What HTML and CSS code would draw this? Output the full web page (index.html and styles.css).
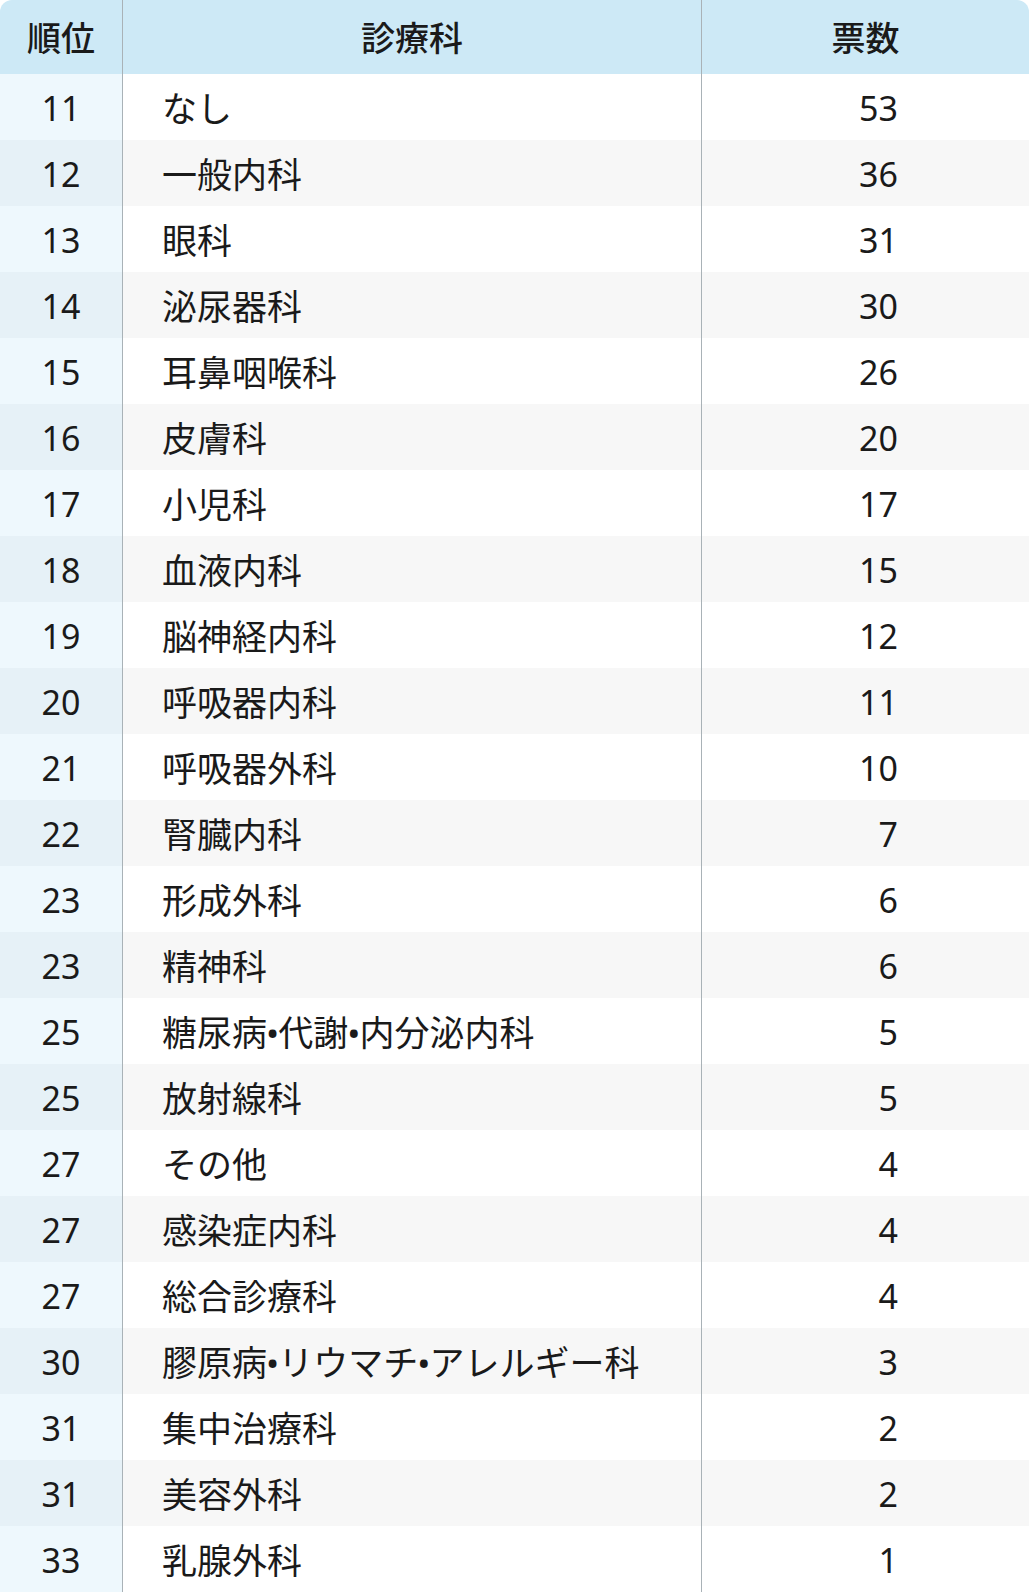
FILE: index.html
```html
<!DOCTYPE html>
<html lang="ja">
<head>
<meta charset="utf-8">
<link rel="stylesheet" href="styles.css">
</head>
<body>
<table class="ranking">
  <thead>
    <tr><th class="c-rank">順位</th><th class="c-name">診療科</th><th class="c-votes">票数</th></tr>
  </thead>
  <tbody>
    <tr><td class="c-rank">11</td><td class="c-name">なし</td><td class="c-votes">53</td></tr>
    <tr><td class="c-rank">12</td><td class="c-name">一般内科</td><td class="c-votes">36</td></tr>
    <tr><td class="c-rank">13</td><td class="c-name">眼科</td><td class="c-votes">31</td></tr>
    <tr><td class="c-rank">14</td><td class="c-name">泌尿器科</td><td class="c-votes">30</td></tr>
    <tr><td class="c-rank">15</td><td class="c-name">耳鼻咽喉科</td><td class="c-votes">26</td></tr>
    <tr><td class="c-rank">16</td><td class="c-name">皮膚科</td><td class="c-votes">20</td></tr>
    <tr><td class="c-rank">17</td><td class="c-name">小児科</td><td class="c-votes">17</td></tr>
    <tr><td class="c-rank">18</td><td class="c-name">血液内科</td><td class="c-votes">15</td></tr>
    <tr><td class="c-rank">19</td><td class="c-name">脳神経内科</td><td class="c-votes">12</td></tr>
    <tr><td class="c-rank">20</td><td class="c-name">呼吸器内科</td><td class="c-votes">11</td></tr>
    <tr><td class="c-rank">21</td><td class="c-name">呼吸器外科</td><td class="c-votes">10</td></tr>
    <tr><td class="c-rank">22</td><td class="c-name">腎臓内科</td><td class="c-votes">7</td></tr>
    <tr><td class="c-rank">23</td><td class="c-name">形成外科</td><td class="c-votes">6</td></tr>
    <tr><td class="c-rank">23</td><td class="c-name">精神科</td><td class="c-votes">6</td></tr>
    <tr><td class="c-rank">25</td><td class="c-name">糖尿病<span class="sep">•</span>代謝<span class="sep">•</span>内分泌内科</td><td class="c-votes">5</td></tr>
    <tr><td class="c-rank">25</td><td class="c-name">放射線科</td><td class="c-votes">5</td></tr>
    <tr><td class="c-rank">27</td><td class="c-name">その他</td><td class="c-votes">4</td></tr>
    <tr><td class="c-rank">27</td><td class="c-name">感染症内科</td><td class="c-votes">4</td></tr>
    <tr><td class="c-rank">27</td><td class="c-name">総合診療科</td><td class="c-votes">4</td></tr>
    <tr><td class="c-rank">30</td><td class="c-name">膠原病<span class="sep">•</span>リウマチ<span class="sep">•</span>アレルギー科</td><td class="c-votes">3</td></tr>
    <tr><td class="c-rank">31</td><td class="c-name">集中治療科</td><td class="c-votes">2</td></tr>
    <tr><td class="c-rank">31</td><td class="c-name">美容外科</td><td class="c-votes">2</td></tr>
    <tr><td class="c-rank">33</td><td class="c-name">乳腺外科</td><td class="c-votes">1</td></tr>
  </tbody>
</table>
</body>
</html>
```

FILE: styles.css
```css
html, body {
  margin: 0;
  padding: 0;
  background: #ffffff;
}

.ranking {
  width: 1029px;
  border-collapse: separate;
  border-spacing: 0;
  table-layout: fixed;
  font-family: "Noto Sans", "Noto Sans CJK JP", sans-serif;
  color: #1a1a1a;
  font-size: 34px;
}

.ranking th,
.ranking td {
  padding: 2px 0 0 0;
  height: 64px;
  vertical-align: middle;
  line-height: 1;
}

.ranking thead th {
  height: 72px;
  background: #cde9f6;
  font-weight: 500;
  text-align: center;
}

.ranking thead th:first-child { border-top-left-radius: 12px; }
.ranking thead th:last-child { border-top-right-radius: 12px; }

.ranking .c-rank {
  width: 122px;
  text-align: center;
  border-right: 1px solid #a9b2b7;
}

.ranking .c-name {
  width: 578px;
  border-right: 1px solid #a9b2b7;
}

.ranking td.c-name {
  text-align: left;
  padding-left: 39px;
  font-size: 35px;
}

.ranking td.c-votes {
  text-align: right;
  padding-right: 131px;
}

.ranking .sep {
  font-family: "Noto Sans", sans-serif;
  margin: 0 -1px;
}

.ranking tbody tr:nth-child(odd) td { background: #ffffff; }
.ranking tbody tr:nth-child(even) td { background: #f7f7f7; }
.ranking tbody tr:nth-child(odd) td.c-rank { background: #eef8fd; }
.ranking tbody tr:nth-child(even) td.c-rank { background: #e6f1f7; }
```
